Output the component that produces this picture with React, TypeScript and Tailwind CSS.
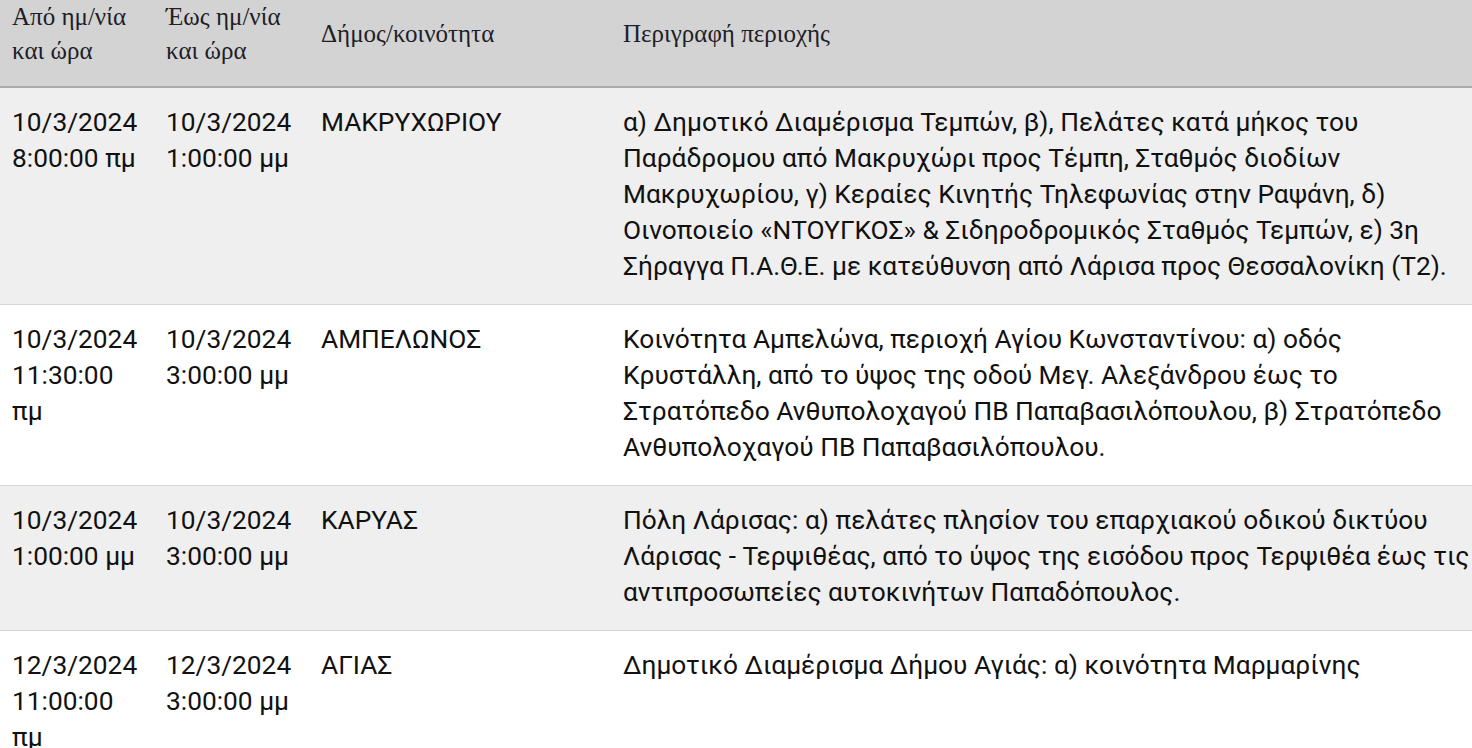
type Row = {
  from: string;
  to: string;
  area: string;
  desc: string;
};

const rows: Row[] = [
  {
    from: '10/3/2024 8:00:00 πμ',
    to: '10/3/2024 1:00:00 μμ',
    area: 'ΜΑΚΡΥΧΩΡΙΟΥ',
    desc: 'α) Δημοτικό Διαμέρισμα Τεμπών, β), Πελάτες κατά μήκος του Παράδρομου από Μακρυχώρι προς Τέμπη, Σταθμός διοδίων Μακρυχωρίου, γ) Κεραίες Κινητής Τηλεφωνίας στην Ραψάνη, δ) Οινοποιείο «ΝΤΟΥΓΚΟΣ» & Σιδηροδρομικός Σταθμός Τεμπών, ε) 3η Σήραγγα Π.Α.Θ.Ε. με κατεύθυνση από Λάρισα προς Θεσσαλονίκη (Τ2).',
  },
  {
    from: '10/3/2024 11:30:00 πμ',
    to: '10/3/2024 3:00:00 μμ',
    area: 'ΑΜΠΕΛΩΝΟΣ',
    desc: 'Κοινότητα Αμπελώνα, περιοχή Αγίου Κωνσταντίνου: α) οδός Κρυστάλλη, από το ύψος της οδού Μεγ. Αλεξάνδρου έως το Στρατόπεδο Ανθυπολοχαγού ΠΒ Παπαβασιλόπουλου, β) Στρατόπεδο Ανθυπολοχαγού ΠΒ Παπαβασιλόπουλου.',
  },
  {
    from: '10/3/2024 1:00:00 μμ',
    to: '10/3/2024 3:00:00 μμ',
    area: 'ΚΑΡΥΑΣ',
    desc: 'Πόλη Λάρισας: α) πελάτες πλησίον του επαρχιακού οδικού δικτύου Λάρισας - Τερψιθέας, από το ύψος της εισόδου προς Τερψιθέα έως τις αντιπροσωπείες αυτοκινήτων Παπαδόπουλος.',
  },
  {
    from: '12/3/2024 11:00:00 πμ',
    to: '12/3/2024 3:00:00 μμ',
    area: 'ΑΓΙΑΣ',
    desc: 'Δημοτικό Διαμέρισμα Δήμου Αγιάς: α) κοινότητα Μαρμαρίνης',
  },
];

const headers = ['Από ημ/νία και ώρα', 'Έως ημ/νία και ώρα', 'Δήμος/κοινότητα', 'Περιγραφή περιοχής'];

export default function App() {
  return (
    <div className="h-[748px] w-[1472px] overflow-hidden bg-white">
      <table className="w-[1472px] table-fixed border-collapse">
        <colgroup>
          <col className="w-[154px]" />
          <col className="w-[155px]" />
          <col className="w-[302px]" />
          <col className="w-[861px]" />
        </colgroup>
        <thead>
          <tr className="border-b-2 border-[#a9a9a9] bg-[#d3d3d3]">
            {headers.map((h, i) => (
              <th
                key={h}
                className={`h-[85px] pb-[18px] pl-3 ${i === 3 ? 'pr-0' : 'pr-3'} text-left align-middle font-normal text-[25px] leading-[34px] text-[#1e1e28] [font-family:'Liberation_Serif',serif]`}
              >
                {h}
              </th>
            ))}
          </tr>
        </thead>
        <tbody className="[font-family:Roboto,sans-serif] text-[26.3px] leading-[36px] text-[#111]">
          {rows.map((r, i) => (
            <tr
              key={i}
              className={`border-b border-[#d6d6d6] ${i % 2 === 0 ? 'bg-[#efefef]' : 'bg-white'}`}
            >
              <td className="pt-4 pb-5 pl-3 pr-3 align-top">{r.from}</td>
              <td className="pt-4 pb-5 pl-3 pr-3 align-top">{r.to}</td>
              <td className="pt-4 pb-5 pl-3 pr-3 align-top">{r.area}</td>
              <td className="pt-4 pb-5 pl-3 pr-0 align-top">{r.desc}</td>
            </tr>
          ))}
        </tbody>
      </table>
    </div>
  );
}
